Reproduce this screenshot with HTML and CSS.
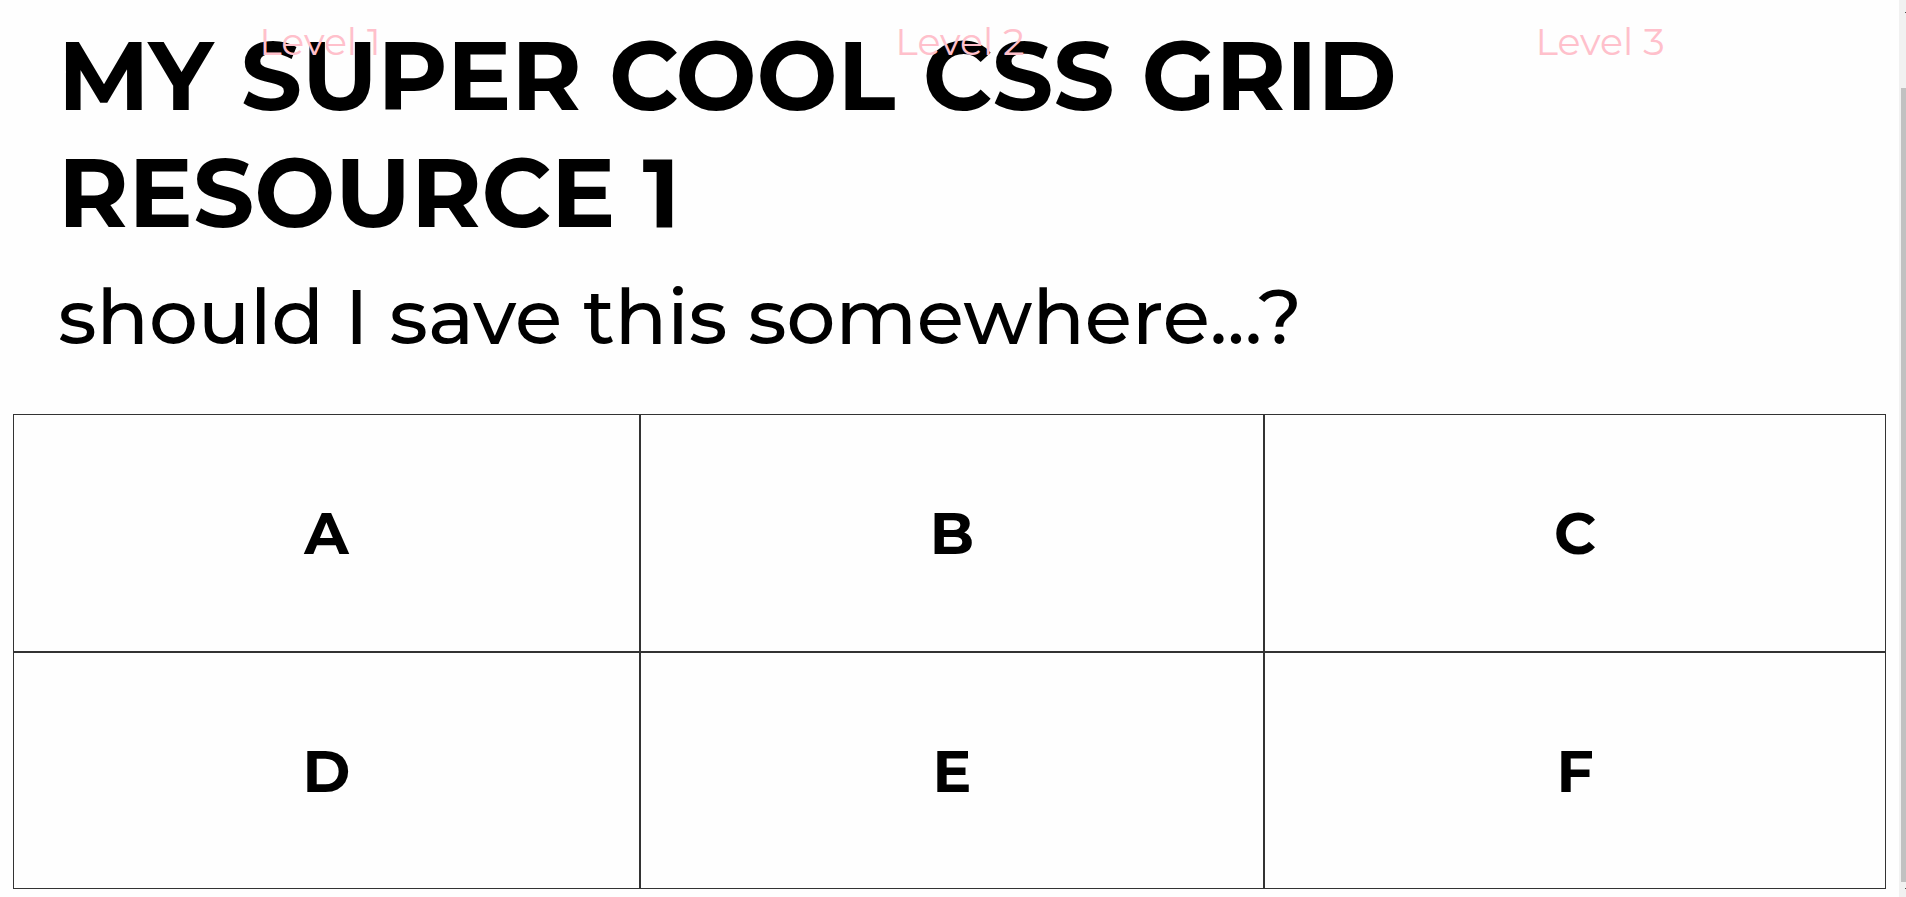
FILE: index.html
```html
<!DOCTYPE html>
<html lang="en">
<head>
<meta charset="utf-8">
<title>My Super Cool CSS Grid Resource 1</title>
<link rel="stylesheet" href="styles.css">
</head>
<body>
<div class="page">
  <main class="content">
    <header class="intro">
      <h1 class="title">MY SUPER COOL CSS GRID RESOURCE 1</h1>
      <p class="subtitle">should I save this somewhere...?</p>
    </header>
    <section class="grid">
      <div class="cell">A</div>
      <div class="cell">B</div>
      <div class="cell">C</div>
      <div class="cell">D</div>
      <div class="cell">E</div>
      <div class="cell">F</div>
    </section>
  </main>
  <div class="scrollbar" aria-hidden="true">
    <div class="arrow"></div>
    <div class="thumb"></div>
    <div class="arrow"></div>
  </div>
  <div class="levels">
    <span>Level 1</span>
    <span>Level 2</span>
    <span>Level 3</span>
  </div>
</div>
</body>
</html>
```
FILE: styles.css
```css
* {
  box-sizing: border-box;
}

body {
  margin: 0;
  background: #fefefe;
  color: #000;
  font-family: Montserrat, Inter, "Open Sans", sans-serif;
}

.page {
  position: relative;
  display: flex;
  min-height: 100vh;
  overflow: hidden;
}

.content {
  flex: 1;
  display: flex;
  flex-direction: column;
  padding: 17px 13px 8px;
}

.intro {
  padding: 0 45px 50px;
}

.title {
  margin: 0;
  max-width: 1500px;
  font-size: 96px;
  line-height: 117px;
  font-weight: 700;
}

.subtitle {
  margin: 17px 0 0;
  font-size: 77px;
  line-height: 96px;
  font-weight: 500;
}

.grid {
  flex: 1;
  display: grid;
  grid-template-columns: 627fr 624fr 622fr;
  grid-auto-rows: 1fr;
}

.cell {
  display: flex;
  align-items: center;
  justify-content: center;
  padding-top: 3px;
  border: 1px solid #333;
  font-size: 58px;
  line-height: 72px;
  font-weight: 700;
}

.levels {
  position: absolute;
  top: 18px;
  left: 0;
  right: -14px;
  display: grid;
  grid-template-columns: repeat(3, 1fr);
  color: pink;
  font-size: 38px;
  line-height: 48px;
  text-align: center;
}

.scrollbar {
  width: 7px;
  display: flex;
  flex-direction: column;
  padding: 12px 0 8px 2px;
  background: #f1f1f1;
}

.arrow {
  align-self: flex-end;
  width: 1px;
  height: 1px;
  background: #505050;
}

.thumb {
  flex: 1;
  margin: 75px 0 6px;
  background: #c1c1c1;
}
```
